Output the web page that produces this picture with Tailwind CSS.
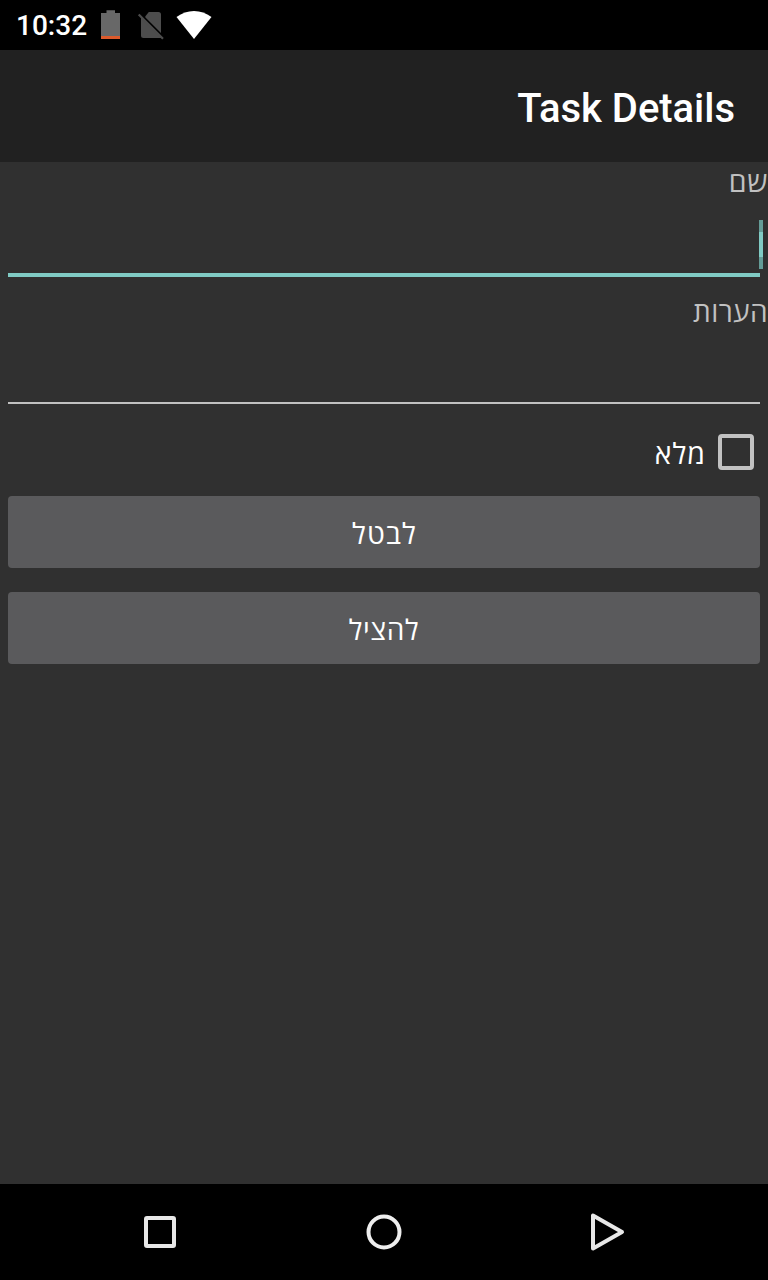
<!DOCTYPE html>
<html lang="he">
<head>
<meta charset="utf-8">
<title>Task Details</title>
<script src="https://cdn.jsdelivr.net/npm/@tailwindcss/browser@4"></script>
</head>
<body class="bg-[#303030]">
<div class="w-[768px] h-[1280px] flex flex-col overflow-hidden bg-[#303030] font-['Roboto','Noto_Sans',sans-serif] text-white">
  <div class="h-[50px] shrink-0 bg-black flex items-center pl-4">
    <span class="w-[71px] pt-0.5 text-[28px] leading-[50px] font-medium whitespace-nowrap">10:32</span>
    <svg class="w-[130px] h-[50px] shrink-0" viewBox="87 0 130 50">
      <path d="M101 13h5.500v-2.700h8.500V13h5v23h-19z" fill="#686868"/>
      <path d="M101 36h19v3h-19z" fill="#dc5a2c"/>
      <path d="M148.800 12h9.700q2.500 0 2.500 2.500V33L145.200 17.200q0-.9.800-1.700zM141 16.800L161.500 37.300l-1 .7h-17q-2.500 0-2.500-2.500z" fill="#4d4d4d"/>
      <path d="M138.700 14.500L163 38.800" stroke="#4d4d4d" stroke-width="2.200" fill="none"/>
      <path d="M176.500 17Q184.500 11 194 11t17.500 6L194 39z" fill="#fff"/>
    </svg>
  </div>
  <div class="h-[112px] shrink-0 bg-[#212121] flex items-center justify-end pr-[33px] pt-1.5">
    <h1 class="text-[40px] leading-[48px] font-medium tracking-[-0.03px] whitespace-nowrap">Task Details</h1>
  </div>
  <main dir="rtl" class="flex-1 flex flex-col font-['Noto_Sans','Open_Sans',sans-serif]">
    <label class="h-[38px] text-[28.500px] leading-[39px] tracking-[0.6px] text-[#c1c1c1]">שם</label>
    <div class="h-[91px] pt-5 px-2">
      <div class="h-[57px] border-b-4 border-[#80cbc4]">
        <div class="w-1 h-[49px] -mr-[3px] bg-[#649c97] py-3"><div class="h-[25px] bg-[#80cbc4]"></div></div>
      </div>
    </div>
    <label class="h-[38px] text-[28px] leading-[40px] tracking-[0.4px] text-[#c1c1c1]">הערות</label>
    <div class="h-[91px] px-2"><div class="h-[75px] border-b-2 border-[#c1c1c1]"></div></div>
    <div class="h-16 flex items-center pr-[14px]">
      <div class="w-9 h-9 shrink-0 border-4 border-[#c1c1c1] rounded-[4px]"></div>
      <span class="mr-3 pt-0.5 text-[28.500px] leading-[38px] tracking-[1px]">מלא</span>
    </div>
    <div class="flex flex-col gap-6 px-2 pt-3">
      <button class="h-[72px] rounded-[4px] bg-[#5a5a5c] pt-0.5 pl-px text-[28.500px] leading-[38px] tracking-[1.1px]">לבטל</button>
      <button class="h-[72px] rounded-[4px] bg-[#5a5a5c] pt-0.5 text-[28px] leading-[38px] tracking-[0.7px]">להציל</button>
    </div>
  </main>
  <nav class="h-24 shrink-0 bg-black flex items-center justify-center gap-44">
    <svg class="w-12 h-12" viewBox="0 0 48 48" fill="none" stroke="#e8e8e8" stroke-width="4" stroke-linejoin="round"><rect x="10" y="10" width="28" height="28" rx="1"/></svg>
    <svg class="w-12 h-12" viewBox="0 0 48 48" fill="none" stroke="#eee" stroke-width="4"><circle cx="24" cy="24" r="15.500"/></svg>
    <svg class="w-12 h-12" viewBox="0 0 48 48" fill="none" stroke="#e8e8e8" stroke-width="4" stroke-linejoin="round"><path d="M9 7.500v33L38 24z"/></svg>
  </nav>
</div>
</body>
</html>
